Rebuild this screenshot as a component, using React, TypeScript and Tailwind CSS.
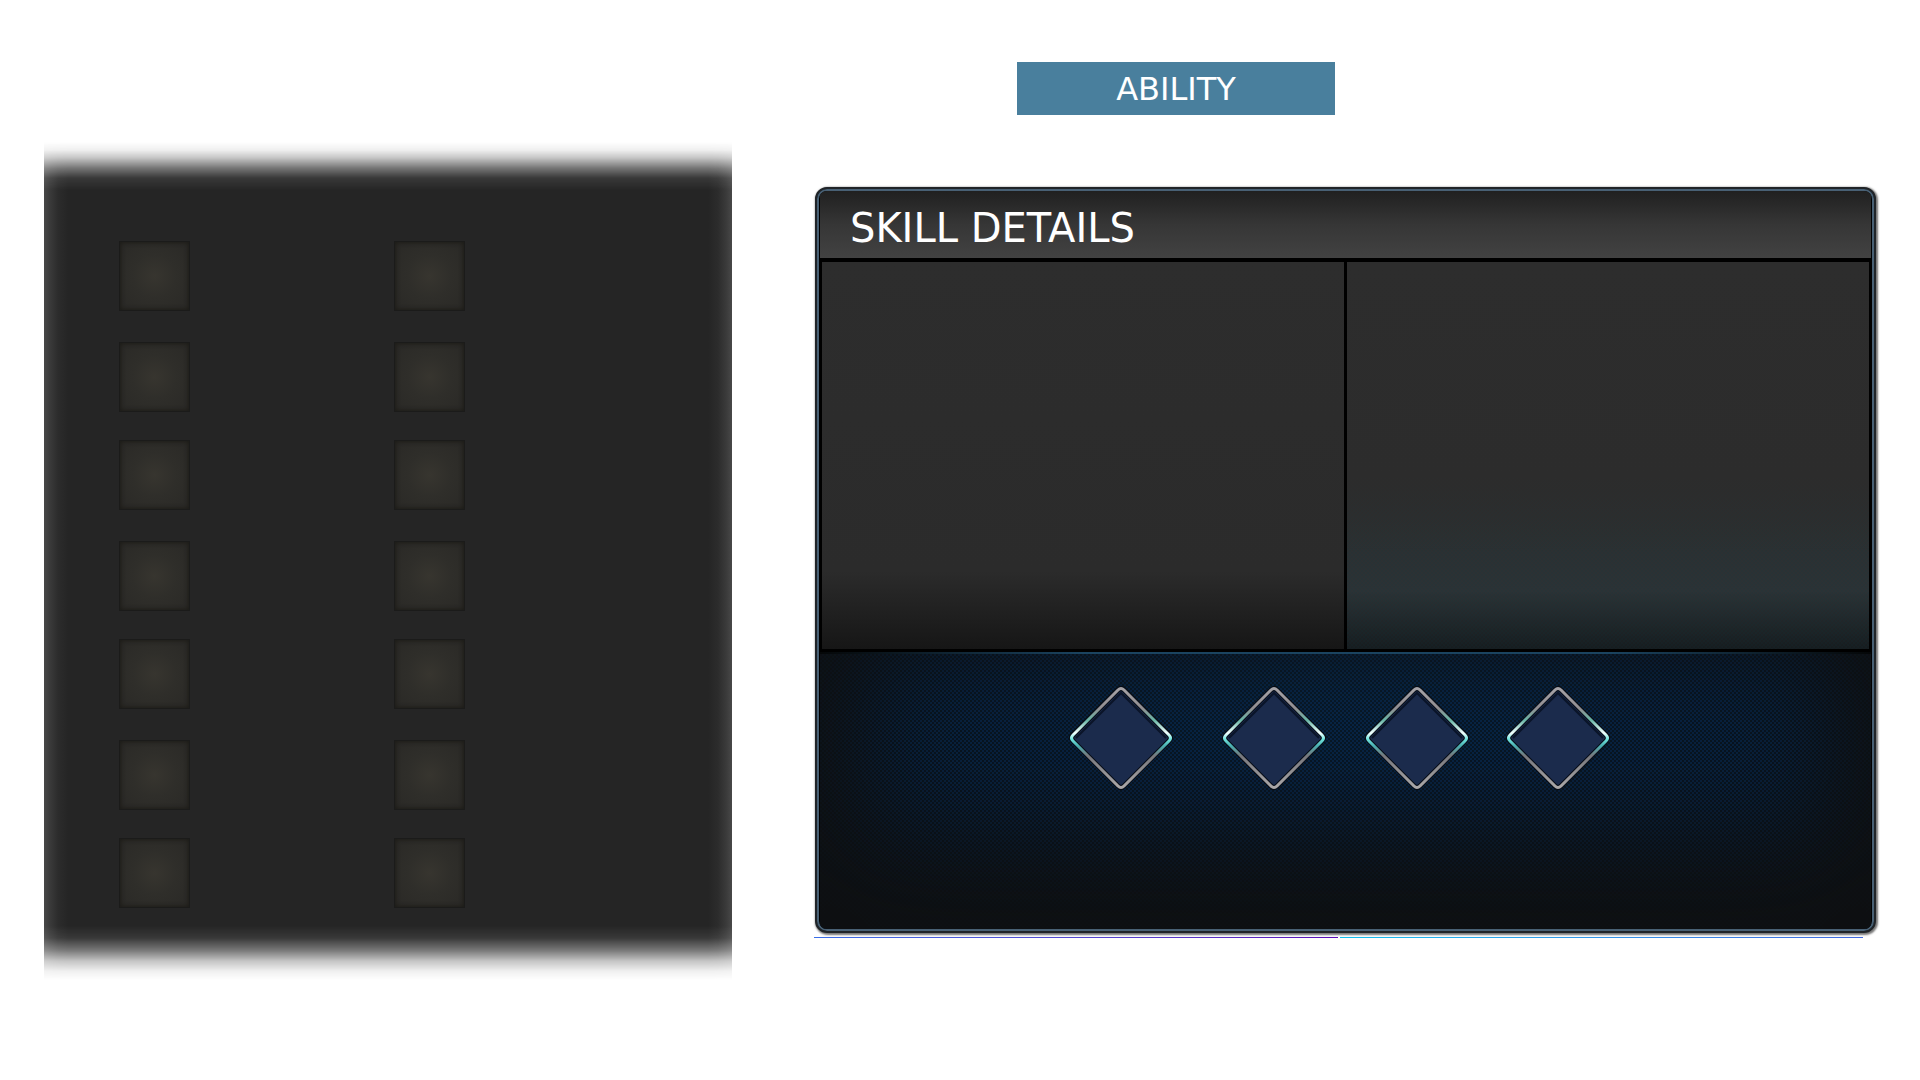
const slotPairs = ['a', 'b', 'c', 'd'];

function Slot({ label }: { label: string }) {
  return (
    <button
      type="button"
      aria-label={label}
      className="h-[70px] w-[71px] border border-[#1b1b1a] bg-[radial-gradient(circle,#37352f_0%,#2f2e2a_45%,#2a2926_100%)] shadow-[inset_0_0_4px_1px_#1d1c18]"
    />
  );
}

function SlotRow({ name }: { name: string }) {
  return (
    <div className="grid grid-cols-[275px_71px]">
      <Slot label={`Left slot ${name}`} />
      <Slot label={`Right slot ${name}`} />
    </div>
  );
}

function SkillSlots() {
  return (
    <section
      aria-label="Skill slots"
      className="mt-[142px] min-w-0 space-y-7 self-start bg-[linear-gradient(90deg,#484848_0,#3a3a3a_6px,#2c2c2c_14px,#252525_24px,#252525_calc(100%-24px),#2c2c2c_calc(100%-14px),#3a3a3a_calc(100%-6px),#484848_100%)] mask-[linear-gradient(transparent_0,#00000012_8px,#00000045_16px,#000000a0_26px,#000000e8_36px,#000_48px,#000_calc(100%-54px),#000000e8_calc(100%-42px),#000000a0_calc(100%-30px),#00000045_calc(100%-19px),#00000012_calc(100%-9px),transparent_100%)] px-[75px] pt-[99px] pb-[72px]"
    >
      {slotPairs.map((p, i) => (
        <div key={p} className="space-y-[31px]">
          <SlotRow name={`${p}1`} />
          {i < 3 && <SlotRow name={`${p}2`} />}
        </div>
      ))}
    </section>
  );
}

function Diamond({ label }: { label: string }) {
  return (
    <button type="button" aria-label={label} className="block size-[104px]">
      <svg viewBox="0 0 104 104" className="block size-full overflow-visible">
        <defs>
          <linearGradient id="rim" x1="0" y1="0" x2="0" y2="1">
            <stop offset="0" stopColor="#a5a2a6" />
            <stop offset="0.2" stopColor="#918d91" />
            <stop offset="0.32" stopColor="#68b5a6" />
            <stop offset="0.45" stopColor="#f2ffff" />
            <stop offset="0.51" stopColor="#72e5df" />
            <stop offset="0.58" stopColor="#48aeb0" />
            <stop offset="0.68" stopColor="#77777c" />
            <stop offset="1" stopColor="#aaa7a8" />
          </linearGradient>
        </defs>
        <path
          d="M49 4Q52 1 55 4L100 49Q103 52 100 55L55 100Q52 103 49 100L4 55Q1 52 4 49Z"
          fill="#1b2b4c"
          stroke="#060c16"
          strokeWidth="5"
        />
        <path d="M7 52L52 7L97 52" fill="none" stroke="#0a1428" strokeWidth="2" />
        <path
          d="M49 4Q52 1 55 4L100 49Q103 52 100 55L55 100Q52 103 49 100L4 55Q1 52 4 49Z"
          fill="none"
          stroke="url(#rim)"
          strokeWidth="3"
        />
      </svg>
    </button>
  );
}

function SkillDetails() {
  return (
    <section className="mt-[72px]">
      <div className="mx-px rounded-xl border-2 border-[#202428] bg-black shadow-[1px_1px_2px_1px_#777]">
        <div className="overflow-hidden rounded-[10px] border-2 border-[#486074] px-px">
          <header className="flex h-[67px] items-center bg-linear-to-b from-[#202020] via-[#363636] to-[#424242] pt-1.5 pl-[30px]">
            <h1 className="font-['DejaVu_Sans'] text-[40px] leading-[40px] whitespace-nowrap text-white">SKILL DETAILS</h1>
          </header>
          <div className="grid grid-cols-2 gap-[3px] border-x-2 border-t-[4px] border-b-[3px] border-black">
            <div className="h-[387px] bg-[linear-gradient(#2d2d2d_0%,#2b2b2b_80%,#161616_100%)]" />
            <div className="h-[387px] bg-[linear-gradient(#2d2d2d_0%,#2c2c2c_55%,transparent_75%),repeating-conic-gradient(#00404818_0_25%,transparent_0_50%),linear-gradient(#2d2d2d_0%,#2c2c2c_55%,#2c3235_85%,#171c1f_100%)] bg-size-[auto,4px_4px,auto]" />
          </div>
          <div className="h-[2px] bg-[linear-gradient(90deg,#050708,#1b4460_25%,#1b4460_75%,#050708)]" />
          <div className="h-[275px] bg-[repeating-conic-gradient(#00307040_0_25%,#00000050_0_50%),radial-gradient(ellipse_60%_100%_at_50%_0%,#0a2640_0%,#0b1f33_50%,#0c1a28_100%)] bg-size-[4px_4px,auto] pt-[32px] shadow-[inset_0_-50px_100px_40px_#0e1012]">
            <div className="flex justify-center pr-[12px]">
              <Diamond label="Skill 1" />
              <div className="ml-[49px]"><Diamond label="Skill 2" /></div>
              <div className="ml-[39px]"><Diamond label="Skill 3" /></div>
              <div className="ml-[37px]"><Diamond label="Skill 4" /></div>
            </div>
          </div>
        </div>
      </div>
      <div className="mt-[4px] mr-[14px] grid grid-cols-2 gap-[2px]">
        <div className="h-px bg-linear-to-r from-[#3a6ee8] to-[#5a08b8]" />
        <div className="h-px bg-linear-to-r from-[#10c0f0] to-[#4068e0]" />
      </div>
    </section>
  );
}

export default function App() {
  return (
    <main className="grid min-h-screen grid-cols-[688fr_1063fr] gap-[82px] bg-white pr-[43px] pl-[44px]">
      <SkillSlots />
      <div className="min-w-0 pt-[62px]">
        <div className="ml-[203px]">
          <button type="button" className="block h-[53px] w-[318px] bg-[#497f9d] font-['DejaVu_Sans'] text-[32px] leading-[32px] text-white">
            ABILITY
          </button>
        </div>
        <SkillDetails />
      </div>
    </main>
  );
}
